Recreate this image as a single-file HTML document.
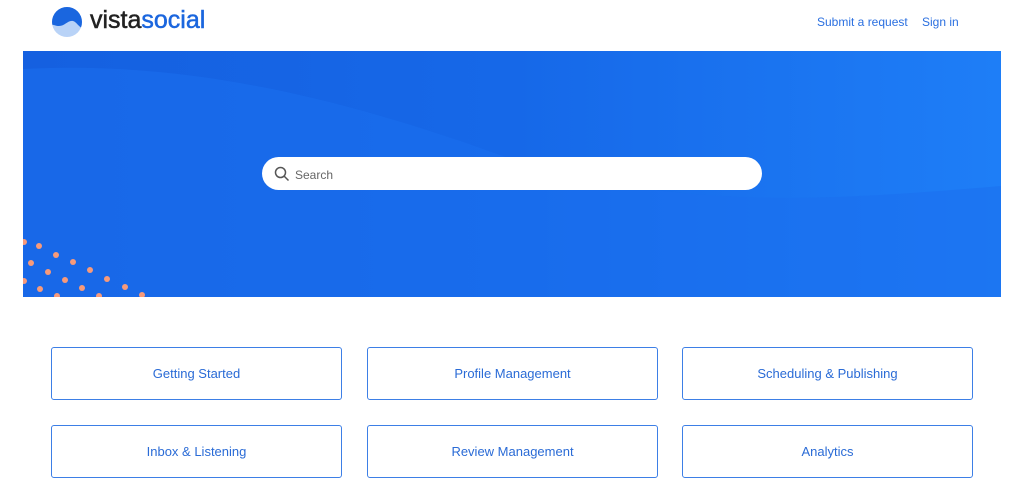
<!DOCTYPE html>
<html><head><meta charset="utf-8"><style>
*{margin:0;padding:0;box-sizing:border-box}
body{width:1024px;height:487px;background:#fff;font-family:"Liberation Sans",sans-serif;position:relative;overflow:hidden}
.logo{position:absolute;left:51px;top:6px}
.brand{position:absolute;left:90px;top:6px;font-size:25px;letter-spacing:0px;-webkit-text-stroke:0.5px currentColor}
.nav{position:absolute;top:15px;font-size:12px;color:#2a6fe0}
.hero{position:absolute;left:23px;top:51px;width:978px;height:246px;overflow:hidden;background:linear-gradient(90deg,#1560e0 0%,#1668e8 50%,#1e7ef7 100%)}
.search{position:absolute;left:262px;top:157px;width:500px;height:33px;background:#fff;border-radius:17px}
.search span{position:absolute;left:33px;top:11px;font-size:12px;color:#666}
.card{position:absolute;width:291px;height:53px;border:1px solid #3d7fe6;border-radius:3px;display:flex;align-items:center;justify-content:center;font-size:13px;color:#2a6bd6}
</style></head><body>
<svg class="logo" width="32" height="32" viewBox="0 0 32 32"><defs><clipPath id="c"><circle cx="16" cy="16" r="15"/></clipPath></defs><circle cx="16" cy="16" r="15" fill="#b9d3f7"/><path clip-path="url(#c)" d="M0 0H32V22C28 22 26 16 22 15C17 14 14 20 8 20C4 20 2 18 0 19Z" fill="#1a66df"/></svg>
<div class="brand"><span style="color:#222">vista</span><span style="color:#1b66de">social</span></div>
<div class="nav" style="left:817px">Submit a request</div>
<div class="nav" style="left:922px">Sign in</div>
<div class="hero">
<svg width="978" height="246" style="position:absolute;left:0;top:0">
<path d="M0 18C150 10 300 40 480 105C650 160 800 150 978 135V246H0Z" fill="#1b6fef" opacity="0.55"/>
<g fill="#f79a7a">
<circle cx="1" cy="191" r="3"/><circle cx="16" cy="195" r="3"/><circle cx="33" cy="204" r="3"/><circle cx="8" cy="212" r="3"/><circle cx="50" cy="211" r="3"/><circle cx="25" cy="221" r="3"/><circle cx="67" cy="219" r="3"/><circle cx="1" cy="230" r="3"/><circle cx="42" cy="229" r="3"/><circle cx="84" cy="228" r="3"/><circle cx="17" cy="238" r="3"/><circle cx="59" cy="237" r="3"/><circle cx="102" cy="236" r="3"/><circle cx="34" cy="245" r="3"/><circle cx="76" cy="245" r="3"/><circle cx="119" cy="244" r="3"/>
</g></svg>
</div>
<div class="search"><svg width="16" height="16" style="position:absolute;left:12px;top:9px" viewBox="0 0 16 16"><circle cx="6.5" cy="6.5" r="5" fill="none" stroke="#555" stroke-width="1.5"/><path d="M10 10L14.5 14.5" stroke="#555" stroke-width="1.5"/></svg><span>Search</span></div>
<div class="card" style="left:51px;top:347px">Getting Started</div>
<div class="card" style="left:367px;top:347px">Profile Management</div>
<div class="card" style="left:682px;top:347px">Scheduling &amp; Publishing</div>
<div class="card" style="left:51px;top:425px">Inbox &amp; Listening</div>
<div class="card" style="left:367px;top:425px">Review Management</div>
<div class="card" style="left:682px;top:425px">Analytics</div>
</body></html>
